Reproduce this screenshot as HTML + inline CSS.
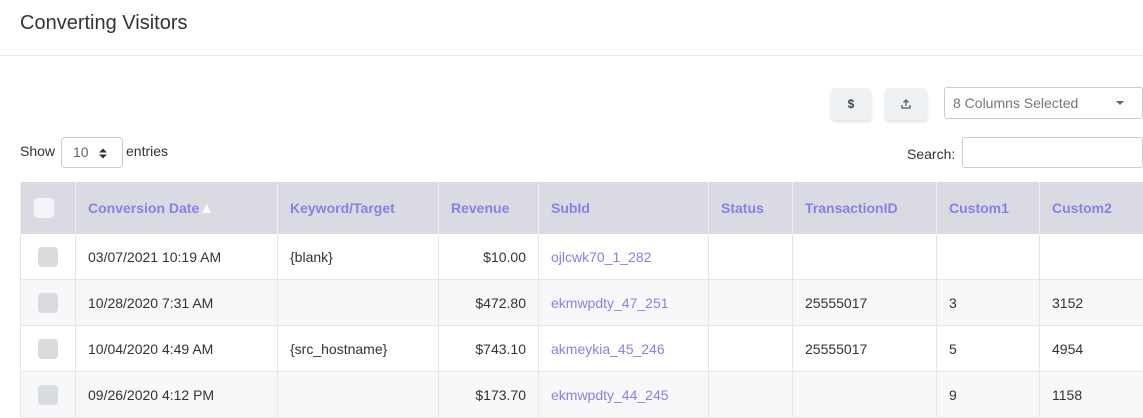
<!DOCTYPE html><html><head><style>
body{margin:0;width:1143px;height:413px;overflow:hidden;background:#fff;font-family:"Liberation Sans",sans-serif;color:#333;font-size:14px}
.title{position:absolute;left:20px;top:12px;font-size:20px;color:#333}
.hr{position:absolute;left:0;top:55px;width:1143px;height:1px;background:#e8e8ec}
.btn{position:absolute;top:88px;width:40px;height:32px;background:#eef1f4;border-radius:4px;box-shadow:0 2px 3px rgba(0,0,0,.12);text-align:center;line-height:32px;font-size:12px;font-weight:bold;color:#444}
.sel{position:absolute;left:944px;top:87px;width:199px;height:32px;border:1px solid #ccc;border-radius:3px;box-sizing:border-box;padding-left:8px;line-height:30px;color:#777;font-size:14px}
.sel:after{content:"";position:absolute;right:18px;top:13px;border:4px solid transparent;border-top-color:#666}
.show{position:absolute;left:20px;top:143px}
.len{position:absolute;left:61px;top:137px;width:62px;height:31px;border:1px solid #ccc;border-radius:4px;box-sizing:border-box;padding-left:11px;line-height:29px;color:#666}
.ent{position:absolute;left:126px;top:143px}
.srch{position:absolute;left:907px;top:146px}
.sbox{position:absolute;left:962px;top:137px;width:181px;height:31px;border:1px solid #ccc;border-radius:3px;box-sizing:border-box}
table{position:absolute;left:20px;top:182px;border-collapse:collapse;table-layout:fixed;width:1123px}
th{background:#dadae2;color:#8a7fe6;font-weight:bold;text-align:left;height:52px;padding:0 0 0 12px;border-left:1px solid #eee;font-size:14px}
td{height:45px;padding:0 0 0 12px;border-left:1px solid #e6e6e6;border-bottom:1px solid #e6e6e6;font-size:14px}
tr.g td{background:#f8f8fa}
td.r{text-align:right;padding-right:12px}
td.l{color:#8a7fe6}
.cb{width:20px;height:20px;border-radius:4px;background:#d9dcdf;margin-left:5px}
th .cb{background:#f4f4f8;margin-left:1px}
</style></head><body>
<div class="title">Converting Visitors</div><div class="hr"></div>
<div class="btn" style="left:831px">$</div>
<div class="btn" style="left:885px;width:42px"><svg width="12" height="12" viewBox="0 0 12 12" style="margin-top:10px"><path d="M6 8V2M3.5 4.5L6 2l2.5 2.5M2 7v3h8V7" fill="none" stroke="#555" stroke-width="1.2"/></svg></div>
<div class="sel">8 Columns Selected</div>
<div class="show">Show</div><div class="len">10<svg width="8" height="11" viewBox="0 0 8 11" style="position:absolute;right:15px;top:10px"><path d="M0 4.5L4 0.5 8 4.5ZM0 6.5L4 10.5 8 6.5Z" fill="#333"/></svg></div><div class="ent">entries</div>
<div class="srch">Search:</div><div class="sbox"></div>
<table><colgroup><col style="width:55px"><col style="width:202px"><col style="width:161px"><col style="width:100px"><col style="width:170px"><col style="width:84px"><col style="width:144px"><col style="width:103px"><col style="width:104px"></colgroup>
<tr><th><div class="cb"></div></th><th>Conversion Date<span style="color:#fff;font-size:15px">&#x25B2;</span></th><th>Keyword/Target</th><th>Revenue</th><th>SubId</th><th>Status</th><th>TransactionID</th><th>Custom1</th><th>Custom2</th></tr>
<tr><td><div class="cb"></div></td><td>03/07/2021 10:19 AM</td><td>{blank}</td><td class="r">$10.00</td><td class="l">ojlcwk70_1_282</td><td></td><td></td><td></td><td></td></tr>
<tr class="g"><td><div class="cb"></div></td><td>10/28/2020 7:31 AM</td><td></td><td class="r">$472.80</td><td class="l">ekmwpdty_47_251</td><td></td><td>25555017</td><td>3</td><td>3152</td></tr>
<tr><td><div class="cb"></div></td><td>10/04/2020 4:49 AM</td><td>{src_hostname}</td><td class="r">$743.10</td><td class="l">akmeykia_45_246</td><td></td><td>25555017</td><td>5</td><td>4954</td></tr>
<tr class="g"><td><div class="cb"></div></td><td>09/26/2020 4:12 PM</td><td></td><td class="r">$173.70</td><td class="l">ekmwpdty_44_245</td><td></td><td></td><td>9</td><td>1158</td></tr>
</table></body></html>
